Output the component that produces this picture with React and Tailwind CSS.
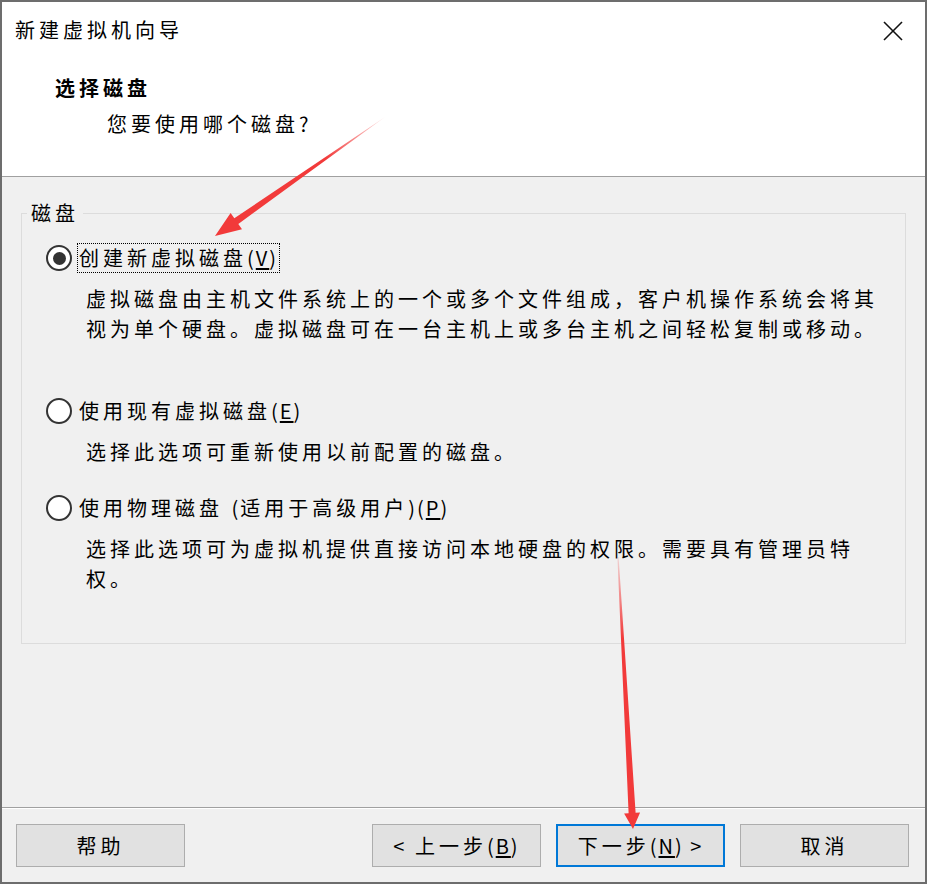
import React from "react";

const FONT = "font-['Noto_Sans_CJK_SC','Microsoft_YaHei',sans-serif]";

function M({ children }) {
  return <span className="tracking-[2px]">{children}</span>;
}

function Radio({ checked }) {
  return (
    <div className="w-[26px] h-[26px] rounded-full border-2 border-[#333] bg-white flex items-center justify-center shrink-0">
      {checked && <div className="w-[13px] h-[13px] rounded-full bg-[#333]" />}
    </div>
  );
}

function Btn({ children, primary }) {
  return (
    <div
      className={
        "w-[169px] h-[43px] bg-[#e1e1e1] flex items-center justify-center text-[20px] leading-[30px] text-black " +
        (primary ? "border-2 border-[#0078d7]" : "border border-[#adadad]")
      }
    >
      <span className="whitespace-pre">{children}</span>
    </div>
  );
}

export default function App() {
  return (
    <div className={"relative w-[927px] h-[884px] border-2 border-[#6d6d6d] flex flex-col text-black tracking-[4px] " + FONT}>
      {/* header */}
      <div className="h-[175px] bg-white border-b border-[#a0a0a0] pl-[13px] pt-[13px] relative">
        <div className="text-[20px] leading-[30px]">新建虚拟机向导</div>
        <svg className="absolute right-[21px] top-[18px]" width="22" height="22" viewBox="0 0 22 22">
          <line x1="2" y1="2" x2="20" y2="20" stroke="#111" strokeWidth="1.6" />
          <line x1="20" y1="2" x2="2" y2="20" stroke="#111" strokeWidth="1.6" />
        </svg>
        <div className="ml-[40px] mt-[28px] text-[20px] leading-[30px] font-bold">选择磁盘</div>
        <div className="ml-[92px] mt-[6px] text-[20px] leading-[30px]">
          您要使用哪个磁盘<M>?</M>
        </div>
      </div>

      {/* body */}
      <div className="h-[630px] bg-[#f0f0f0] px-[19px] pt-[21px]">
        <fieldset className="h-[446px] border border-[#dcdcdc] m-0 p-0">
          <legend className="ml-[5px] px-[4px] text-[20px] leading-[30px]">磁盘</legend>

          <div className="pt-[15px] pl-[24px]">
            <div className="flex items-center h-[30px]">
              <Radio checked />
              <div className="ml-[5px] border border-dotted border-black px-[1px] h-[30px] flex items-center text-[20px] leading-[28px]">
                <span>
                  创建新虚拟磁盘<M>(<span className="underline underline-offset-2">V</span>)</M>
                </span>
              </div>
            </div>
            <div className="ml-[40px] mt-[11px] text-[20px] leading-[30px]">
              <div>虚拟磁盘由主机文件系统上的一个或多个文件组成，客户机操作系统会将其</div>
              <div>视为单个硬盘。虚拟磁盘可在一台主机上或多台主机之间轻松复制或移动。</div>
            </div>

            <div className="flex items-center h-[30px] mt-[52px]">
              <Radio />
              <div className="ml-[7px] text-[20px] leading-[30px]">
                使用现有虚拟磁盘<M>(<span className="underline underline-offset-2">E</span>)</M>
              </div>
            </div>
            <div className="ml-[40px] mt-[11px] text-[20px] leading-[30px]">
              选择此选项可重新使用以前配置的磁盘。
            </div>

            <div className="flex items-center h-[30px] mt-[26px]">
              <Radio />
              <div className="ml-[7px] text-[20px] leading-[30px]">
                使用物理磁盘 <M>(</M>适用于高级用户<M>)(<span className="underline underline-offset-2">P</span>)</M>
              </div>
            </div>
            <div className="ml-[40px] mt-[11px] text-[20px] leading-[30px]">
              <div>选择此选项可为虚拟机提供直接访问本地硬盘的权限。需要具有管理员特</div>
              <div>权。</div>
            </div>
          </div>
        </fieldset>
      </div>

      {/* footer */}
      <div className="border-t border-[#a0a0a0]">
        <div className="border-t border-white h-[74px] bg-[#f0f0f0] flex items-start pt-[15px] pl-[14px] pr-[16px]">
          <Btn>帮助</Btn>
          <div className="flex-1" />
          <div className="flex gap-[15px]">
            <Btn>
              <M>&lt;</M>{" "}上一步<M>(<span className="underline underline-offset-2">B</span>)</M>
            </Btn>
            <Btn primary>
              下一步<M>(<span className="underline underline-offset-2">N</span>){" "}&gt;</M>
            </Btn>
            <Btn>取消</Btn>
          </div>
        </div>
      </div>

      {/* annotation arrows */}
      <svg className="absolute left-[-2px] top-[-2px] pointer-events-none" width="927" height="884" viewBox="0 0 927 884">
        <defs>
          <linearGradient id="g1" x1="385" y1="117" x2="215" y2="236" gradientUnits="userSpaceOnUse">
            <stop offset="0" stopColor="#f23a3a" stopOpacity="0.15" />
            <stop offset="0.35" stopColor="#f23a3a" stopOpacity="1" />
            <stop offset="1" stopColor="#f23a3a" stopOpacity="1" />
          </linearGradient>
          <linearGradient id="g2" x1="618" y1="557" x2="633" y2="829" gradientUnits="userSpaceOnUse">
            <stop offset="0" stopColor="#f23a3a" stopOpacity="0.15" />
            <stop offset="0.3" stopColor="#f23a3a" stopOpacity="1" />
            <stop offset="1" stopColor="#f23a3a" stopOpacity="1" />
          </linearGradient>
        </defs>
        <polygon
          fill="url(#g1)"
          points="385,117 238.3,224 242,229.3 215,236 230.6,212.9 234.3,218.2"
        />
        <polygon
          fill="url(#g2)"
          points="618.6,557 635.6,812.8 640.1,812.6 633,829 624.1,813.4 628.6,813.2 617.4,557"
        />
      </svg>
    </div>
  );
}
